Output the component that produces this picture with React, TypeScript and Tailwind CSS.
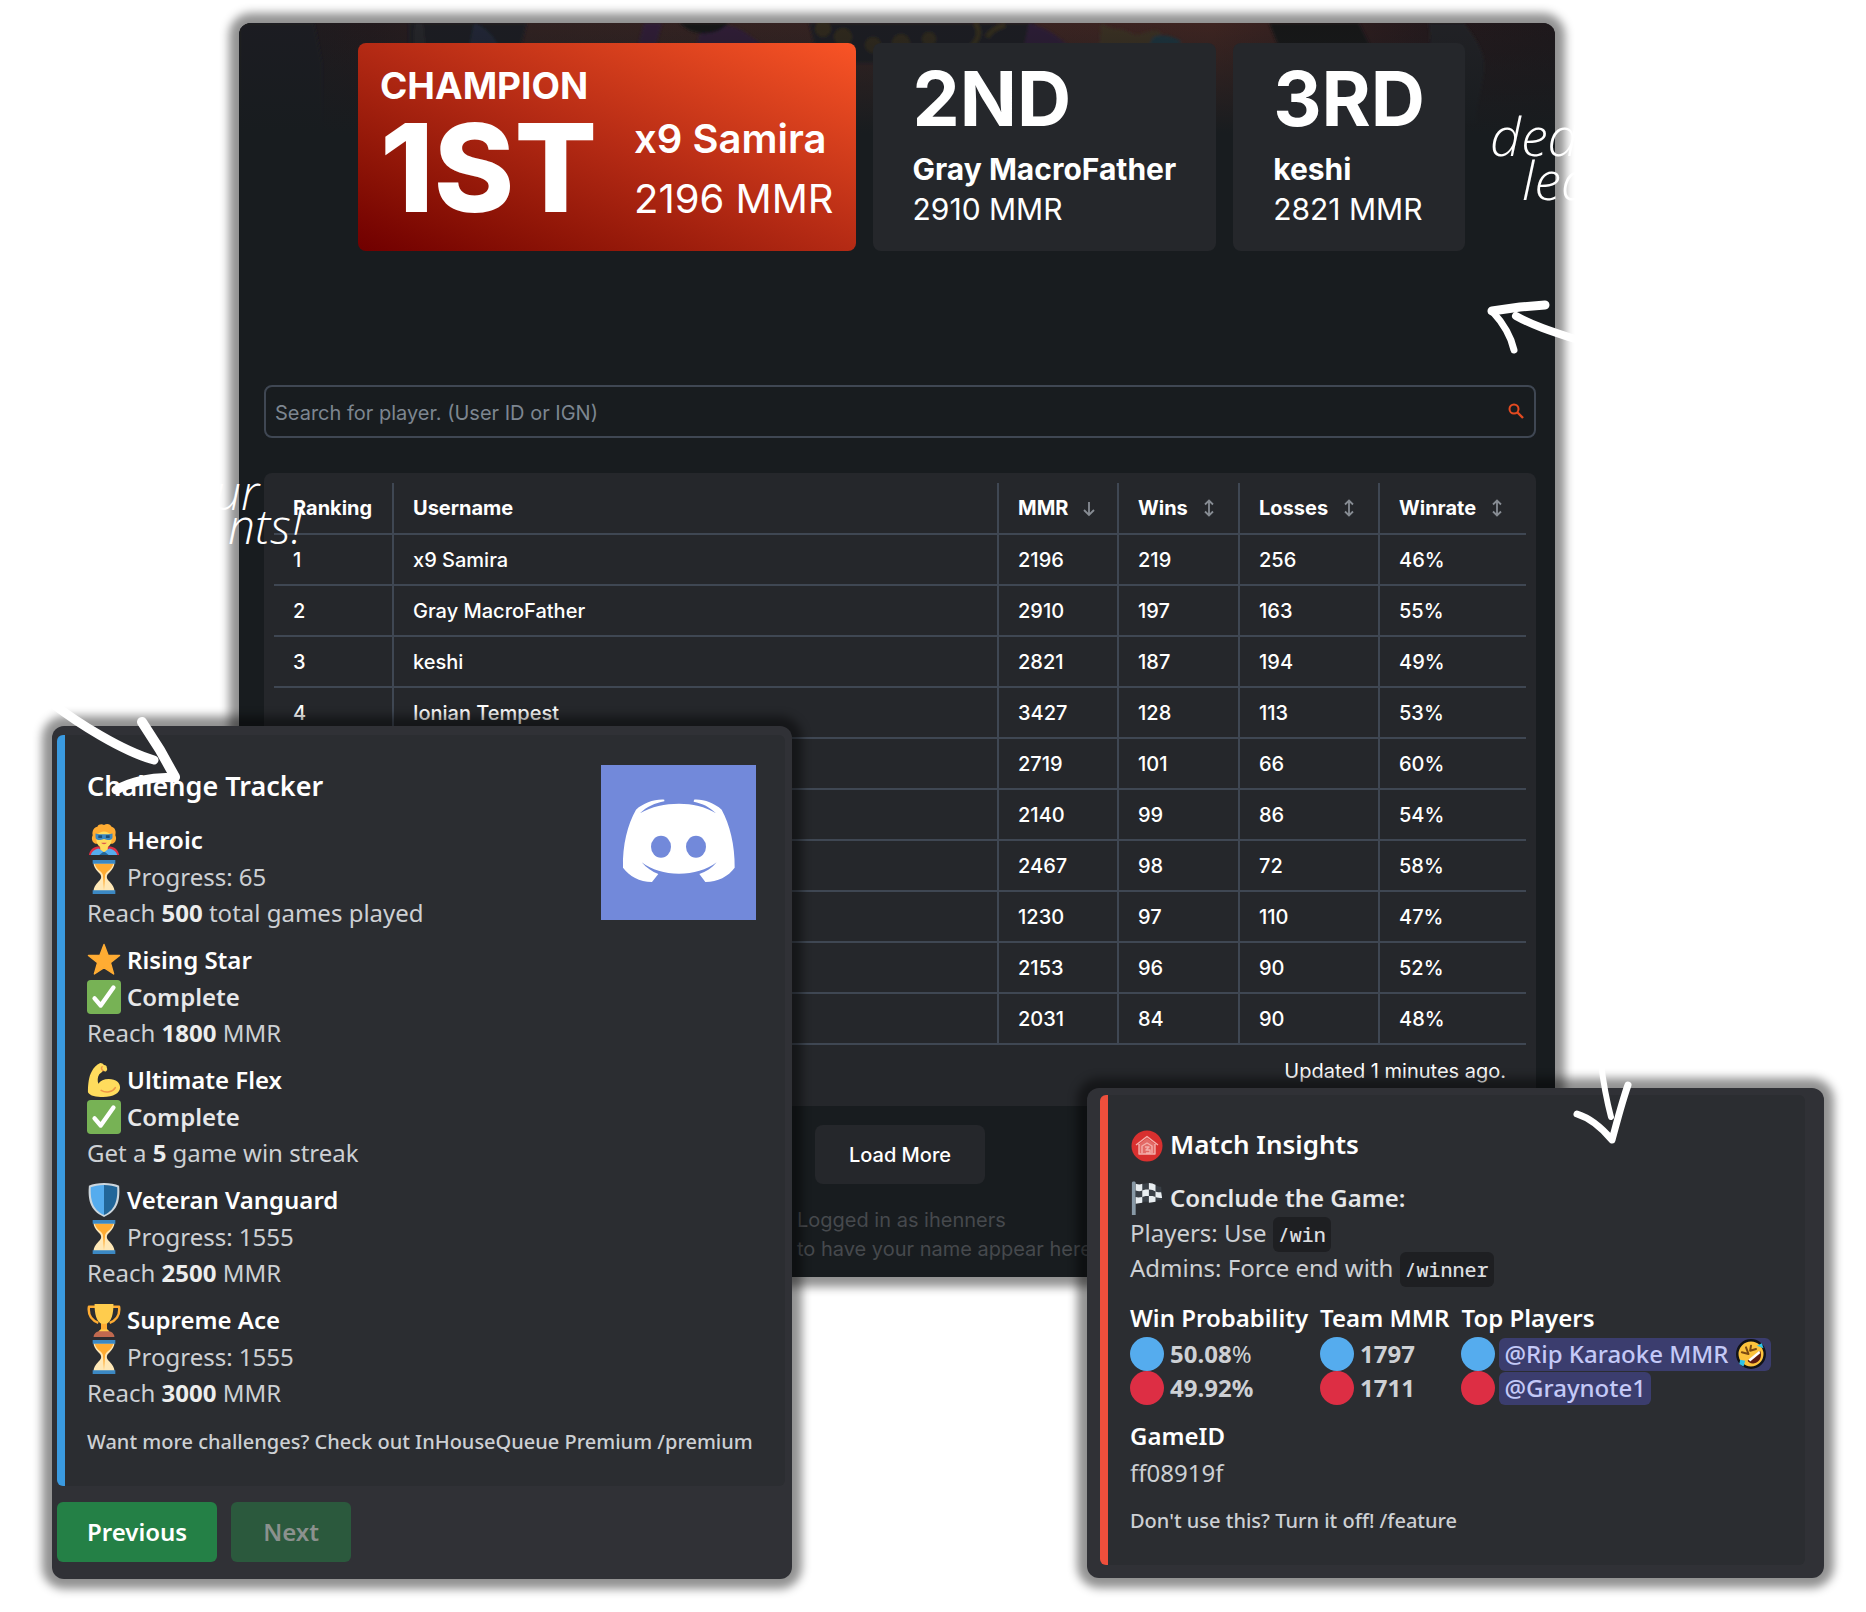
import type { ReactNode } from "react";

type Player = { rank?: number; name?: string; mmr: number; wins: number; losses: number; rate: string };

const players: Player[] = [
  { rank: 1, name: "x9 Samira", mmr: 2196, wins: 219, losses: 256, rate: "46%" },
  { rank: 2, name: "Gray MacroFather", mmr: 2910, wins: 197, losses: 163, rate: "55%" },
  { rank: 3, name: "keshi", mmr: 2821, wins: 187, losses: 194, rate: "49%" },
  { rank: 4, name: "Ionian Tempest", mmr: 3427, wins: 128, losses: 113, rate: "53%" },
  { mmr: 2719, wins: 101, losses: 66, rate: "60%" },
  { mmr: 2140, wins: 99, losses: 86, rate: "54%" },
  { mmr: 2467, wins: 98, losses: 72, rate: "58%" },
  { mmr: 1230, wins: 97, losses: 110, rate: "47%" },
  { mmr: 2153, wins: 96, losses: 90, rate: "52%" },
  { mmr: 2031, wins: 84, losses: 90, rate: "48%" },
];

/* ---------- emoji ---------- */

function Emoji({ children }: { children: ReactNode }) {
  return (
    <svg viewBox="0 0 36 36" className="size-[34px] shrink-0" aria-hidden="true">
      {children}
    </svg>
  );
}

const Hero = () => (
  <Emoji>
    <path fill="#dd2e44" d="M2 34c1-5 4-8 9-9h14c5 1 8 4 9 9z" />
    <path fill="#55acee" d="M4 34c1-4 4-6 8-7l6 3 6-3c4 1 7 3 8 7z" />
    <path fill="#226699" d="M13 34l5-4 5 4z" />
    <path fill="#ffac33" d="M6 13C5 8 8 4 11 4c1-3 5-3 7-2 3-2 7-1 8 2 4 1 5 5 4 9 2 4 0 8-3 9H9c-3-1-5-5-3-9z" />
    <path fill="#ffdc5d" d="M10 12c3-1 5-3 8-3s5 2 8 3v6c0 4-3 8-8 10-5-2-8-6-8-10z" />
    <path fill="#ffdc5d" d="M14 24h8v4l-4 3-4-3z" />
    <path fill="#3b88c3" d="M9 11c3 1 6 1 9 1s6 0 9-1v4c0 2-2 3-5 3-2 0-3-1-4-1s-2 1-4 1c-3 0-5-1-5-3z" />
    <path fill="#1c4d75" d="M12 13h4v3h-4zM20 13h4v3h-4z" />
    <path fill="#dd5a4d" d="M15 21h6c-1 2-5 2-6 0z" />
  </Emoji>
);

const Hourglass = () => (
  <Emoji>
    <path fill="#ffe8b6" d="M21 18c0-2 1-3 3-5 3-3 5-7 5-9V2H7v2c0 2 2 6 5 9 2 2 3 3 3 5s-1 3-3 5c-3 3-5 7-5 9v2h22v-2c0-2-2-6-5-9-2-2-3-3-3-5z" />
    <path fill="#ffac33" d="M8 4c1 3 3 6 6 8 2 2 3 3 3 6l1 14 1-14c0-3 1-4 3-6 3-2 5-5 6-8z" />
    <path fill="#3b88c3" d="M6 0h24v4H6zM6 32h24v4H6z" />
  </Emoji>
);

const Star = () => (
  <Emoji>
    <path fill="#ffac33" d="M18 1.500l4.200 11.300 12.300.5-9.700 7.500 3.400 12L18 26l-10.200 6.800 3.400-12-9.700-7.500 12.300-.5z" stroke="#ffac33" strokeWidth="1.500" strokeLinejoin="round" />
  </Emoji>
);

const Check = () => (
  <Emoji>
    <rect width="36" height="36" rx="4" fill="#77b255" />
    <path d="M8 19.500l6.500 7.500L28 8" fill="none" stroke="#fff" strokeWidth="4.600" strokeLinecap="round" strokeLinejoin="round" />
  </Emoji>
);

const Flex = () => (
  <Emoji>
    <path fill="#ffdc5d" d="M1 31C1 22 2 14 5 9c2-4 5-7 9-9 2 0 3 1 4 2 2 0 3 1 3 3 1 2 0 3-1 4-1 0-2 0-3-1-1 2-3 3-4 4-2 3-2 7-1 10 2-3 6-5 11-5 8 0 12 4 12 9 0 6-7 10-18 10-7 0-14-1-16-5z" />
    <path d="M15 29c5 3 12 2 15-3M17 8c-2-1-2-3-1-4" fill="none" stroke="#ef9645" strokeWidth="1.600" strokeLinecap="round" />
  </Emoji>
);

const Shield = () => (
  <Emoji>
    <path fill="#ccd6dd" d="M18 0C12 0 6 1 2 3c-1 13 0 26 16 33C34 29 35 16 34 3c-4-2-10-3-16-3z" />
    <path fill="#55acee" d="M18 2C12 2 7 3 4 4.500 3.500 16 5 28 18 34z" />
    <path fill="#226699" d="M18 2c6 0 11 1 14 2.500C32.500 16 31 28 18 34z" />
  </Emoji>
);

const Trophy = () => (
  <Emoji>
    <path d="M10 4H2c-1 8 2 14 10 17M26 4h8c1 8-2 14-10 17" fill="none" stroke="#ffac33" strokeWidth="2.600" strokeLinejoin="round" />
    <path fill="#ffcc4d" d="M8 1h20c0 11-2 18-7 21v5c1 2 3 2 3 5H12c0-3 2-3 3-5v-5C10 19 8 12 8 1z" />
    <path fill="#ffac33" d="M15 22h6v6h-6z" />
    <path fill="#c1694f" d="M7 36c0-3 3-6 6-6h10c3 0 6 3 6 6z" />
  </Emoji>
);

const Flag = () => (
  <Emoji>
    <path fill="#8899a6" d="M2 2c0-2 4-2 4 0v34H2z" />
    <path fill="#3a4047" d="M6 3c6 2 9-1 14-1 5 1 8 4 13 4l1 14c-5 0-8 1-13 2-6 0-9 0-15 2z" />
    <path fill="#e8edf0" d="M6 3c3 1 5 1 7 0v7c-2 1-4 1-7 0zM13 10c2-1 5-1 7-1v7c-2 0-5 0-7 1zM6 17c3 1 5 0 7 0v6l-7 1zM20 2c3 0 5 1 7 2v7c-2-1-4-2-7-2zM27 11c2 1 4 1 6 1l1 6c-3 0-5 0-7-1zM20 16c3 0 5 0 7 1v5c-2 0-4 1-7 1z" />
  </Emoji>
);

const Laugh = () => (
  <svg viewBox="0 0 36 36" className="size-[30px] shrink-0" aria-hidden="true">
    <circle cx="18" cy="18" r="16.500" fill="#fcc33c" stroke="#111318" strokeWidth="3" />
    <path d="M14 26L29 14c3 7-1 14-7 15-4 1-7-1-8-3z" fill="#5d1a10" />
    <path d="M15 24.500L28 14l1 3-12 10z" fill="#fff" />
    <path d="M7 16l8 2-3-8M18 8l-1 6 7-2" fill="none" stroke="#7a4a12" strokeWidth="2.400" strokeLinecap="round" strokeLinejoin="round" />
    <path d="M25 8l6-3 2 6zM5 25l6 1-2 7-5-3z" fill="#2fc3e8" />
  </svg>
);

const HouseBadge = () => (
  <svg viewBox="0 0 34 34" className="mt-1 size-[34px] shrink-0" aria-hidden="true">
    <circle cx="17" cy="17" r="15.500" fill="#d8302f" />
    <path d="M9 15l8-6 8 6v10H9z" fill="#e36a66" />
    <path d="M6 16L17 7.500 28 16M9 15v10h16V15M12 24v-7l5-3 5 3v7M15 18h4l-3 3h4v3h-4" fill="none" stroke="#f4b0ac" strokeWidth="1.400" strokeLinejoin="round" />
  </svg>
);

const Dot = ({ blue }: { blue?: boolean }) => (
  <span className={`size-[34px] shrink-0 rounded-full ${blue ? "bg-[#55acee]" : "bg-[#dd2e44]"}`} />
);

/* ---------- leaderboard ---------- */

function HeroArt() {
  return (
    <svg viewBox="0 0 1316 110" preserveAspectRatio="none" className="absolute inset-x-0 top-0 h-[110px] w-full" aria-hidden="true">
      <defs>
        <linearGradient id="sky" x1="0" x2="1" y1="0" y2="0">
          <stop offset="0" stopColor="#1c1c20" />
          <stop offset="0.100" stopColor="#241a1d" />
          <stop offset="0.220" stopColor="#332221" />
          <stop offset="0.500" stopColor="#3a2422" />
          <stop offset="0.740" stopColor="#422521" />
          <stop offset="0.900" stopColor="#26191c" />
          <stop offset="1" stopColor="#1f181b" />
        </linearGradient>
        <linearGradient id="fade" x1="0" x2="0" y1="0" y2="1">
          <stop offset="0" stopColor="#181c1f" stopOpacity="0.100" />
          <stop offset="1" stopColor="#181c1f" />
        </linearGradient>
        <filter id="soften">
          <feGaussianBlur stdDeviation="1.500" />
        </filter>
      </defs>
      <rect width="1316" height="110" fill="url(#sky)" />
      <g filter="url(#soften)">
        <path d="M0 0h75l8 40v70H0z" fill="#1c1f24" />
        <path d="M170 0h118l-16 60H170z" fill="#1d1c22" />
        <path d="M176 0l-4 60h18l-6-60z" fill="#26262b" />
        <path d="M235 0c14 6 20 14 25 24h-30z" fill="#202838" />
        <path d="M405 0h18l-8 30h-18zM460 12c16-10 30-12 44-4l32 22h-80z" fill="#301c38" />
        <path d="M440 0h50c-14 14-36 14-50 0z" fill="#151619" />
        <path d="M570 0h225l20 40H580z" fill="#1c1a20" />
        <g fill="#312c1e">
          <circle cx="584" cy="6" r="8" />
          <circle cx="604" cy="14" r="9" />
          <circle cx="634" cy="22" r="8" />
          <circle cx="662" cy="20" r="9" />
          <circle cx="690" cy="16" r="7" />
        </g>
        <path d="M736 0c6 8 4 16-4 24M766 2c-8 2-14 6-18 12" fill="none" stroke="#352f1d" strokeWidth="5" />
        <path d="M790 0c20 6 34 16 44 28h-50z" fill="#2f1c37" />
        <path d="M862 0c10 8 20 4 30 10s18-6 28-2l14 22h-74z" fill="#3d3024" />
        <path d="M914 14c10-4 20 0 28 4l-6 12h-30z" fill="#1f3640" />
        <path d="M1030 0h90l20 40-10 60h-60z" fill="#191719" />
        <path d="M1190 0h35c12 16 22 30 20 48s-8 34-8 52h-40z" fill="#222226" />
      </g>
      <rect width="1316" height="110" fill="url(#fade)" />
    </svg>
  );
}

function RunnerUp({ place, name, mmr }: { place: string; name: string; mmr: string }) {
  return (
    <article className="rounded-lg bg-[#25272b] px-10 pt-3 text-white">
      <h2 className="text-[75px] leading-[88px] font-bold">{place}</h2>
      <p className="mt-1.5 text-[30px] leading-10 font-bold">{name}</p>
      <p className="text-[30px] leading-10">{mmr}</p>
    </article>
  );
}

function SortIcon({ down }: { down?: boolean }) {
  return (
    <svg viewBox="0 0 12 18" className="h-[18px] w-3" fill="none" stroke="#878c93" strokeWidth="1.800" aria-hidden="true">
      {down ? <path d="M6 3v13M1 11l5 5 5-5" /> : <path d="M6 2v14M2 5.500L6 1.500l4 4M2 12.500l4 4 4-4" />}
    </svg>
  );
}

const headers = [
  { label: "Ranking", width: "w-[119px]" },
  { label: "Username", width: "" },
  { label: "MMR", width: "w-[120px]", sort: "down" },
  { label: "Wins", width: "w-[121px]", sort: "both" },
  { label: "Losses", width: "w-[140px]", sort: "both" },
  { label: "Winrate", width: "w-[147px]", sort: "both" },
];

const cell = "h-[51px] border-b-2 border-r-2 border-[#3f4753] pl-[19px] last:border-r-0";

function Leaderboard() {
  return (
    <main className="relative mr-[311px] ml-[239px] rounded-xl bg-[#181c1f] pt-5 pb-[13px] font-[Inter,sans-serif] text-xl text-white shadow-[0_0_10px_10px_rgba(0,0,0,0.43)]">
      <div className="absolute inset-x-0 top-0 overflow-hidden rounded-t-xl">
        <div className="relative h-[110px]">
          <HeroArt />
        </div>
      </div>

      <section className="relative ml-[119px] flex h-[208px] gap-[17px]">
        <article className="flex rounded-lg bg-linear-to-tr from-[#700000] via-[#b42a14] to-[#f95426] pr-[22px] pl-[22px]">
          <div className="w-[254px]">
            <h2 className="pt-5 text-[37px] leading-[46px] font-bold">CHAMPION</h2>
            <p className="text-[122px] leading-[118px] font-extrabold">1ST</p>
          </div>
          <div className="pt-[71px]">
            <p className="text-[40px] leading-[50px] font-semibold">x9 Samira</p>
            <p className="mt-2.5 text-[40px] leading-[50px]">2196 MMR</p>
          </div>
        </article>
        <RunnerUp place="2ND" name="Gray MacroFather" mmr="2910 MMR" />
        <RunnerUp place="3RD" name="keshi" mmr="2821 MMR" />
      </section>

      <div className="mt-[134px] mr-[19px] ml-[25px] flex h-[53px] items-center rounded-lg border-2 border-[#3f4753] pt-0.5 pr-2.5 pl-[9px]">
        <input
          aria-label="Search for player"
          placeholder="Search for player. (User ID or IGN)"
          className="min-w-0 flex-1 bg-transparent outline-none placeholder:text-[#7d8690]"
        />
        <button aria-label="Search" className="mb-1">
          <svg viewBox="0 0 16 16" className="size-4" fill="none" stroke="#e34a20" strokeWidth="2" aria-hidden="true">
            <circle cx="6" cy="6" r="4.500" />
            <path d="M9.500 9.500L15 15" strokeWidth="2.400" />
          </svg>
        </button>
      </div>

      <section className="mt-[35px] mr-[19px] ml-[25px] rounded-lg bg-[#25272b] p-2.5 pb-0">
        <table className="w-full table-fixed border-collapse">
          <thead>
            <tr>
              {headers.map((h) => (
                <th key={h.label} className={`${cell} ${h.width} text-left font-bold`}>
                  <span className="flex items-center gap-[15px]">
                    {h.label}
                    {h.sort && <SortIcon down={h.sort === "down"} />}
                  </span>
                </th>
              ))}
            </tr>
          </thead>
          <tbody className="font-medium">
            {players.map((p) => (
              <tr key={p.mmr}>
                <td className={cell}>{p.rank}</td>
                <td className={cell}>{p.name}</td>
                <td className={cell}>{p.mmr}</td>
                <td className={cell}>{p.wins}</td>
                <td className={cell}>{p.losses}</td>
                <td className={cell}>{p.rate}</td>
              </tr>
            ))}
          </tbody>
        </table>
        <p className="h-[61px] pt-[11px] pr-5 text-right leading-[30px]">Updated 1 minutes ago.</p>
      </section>

      <div className="mt-[19px] mr-[19px] ml-[25px] flex justify-center">
        <button className="h-[59px] rounded-lg bg-[#25272b] px-[34px] font-medium">Load More</button>
      </div>
      <div className="mt-[22px] ml-[558px] leading-[29px] text-[#46494d]">
        <p>Logged in as ihenners</p>
        <p>to have your name appear here</p>
      </div>
    </main>
  );
}

/* ---------- challenge tracker ---------- */

const challenges = [
  { icon: <Hero />, title: "Heroic", state: "Progress: 65", goal: ["Reach ", "500", " total games played"] },
  { icon: <Star />, title: "Rising Star", goal: ["Reach ", "1800", " MMR"] },
  { icon: <Flex />, title: "Ultimate Flex", goal: ["Get a ", "5", " game win streak"] },
  { icon: <Shield />, title: "Veteran Vanguard", state: "Progress: 1555", goal: ["Reach ", "2500", " MMR"] },
  { icon: <Trophy />, title: "Supreme Ace", state: "Progress: 1555", goal: ["Reach ", "3000", " MMR"] },
];

function DiscordLogo() {
  return (
    <svg viewBox="18 30 465 465" className="size-[155px]" role="img" aria-label="Discord">
      <rect x="18" y="30" width="465" height="465" fill="#7289da" />
      <path
        fill="#fff"
        d="M123 164C146 144 178 132 208 134V139C180 144 155 155 135 175C170 154 210 146 252 146C292 146 330 154 363 175C345 156 322 145 296 140L297 134C326 132 357 144 380 164C404 208 420 270 419 338C400 364 368 381 331 381L313 357C333 351 351 339 365 322C334 345 296 356 252 356C208 356 171 345 140 322C155 339 171 350 190 357L171 381C133 380 103 364 84 338C82 270 98 208 123 164Z"
      />
      <ellipse cx="198" cy="275" rx="30" ry="33" fill="#7289da" />
      <ellipse cx="303" cy="275" rx="30" ry="33" fill="#7289da" />
    </svg>
  );
}

function ChallengeTracker() {
  return (
    <section className="absolute top-[726px] left-[52px] w-[740px] rounded-xl bg-[#303136] pt-[9px] pr-[7px] pb-[17px] pl-[5px] font-['Noto_Sans',sans-serif] text-2xl text-[#cdd0d4] shadow-[0_0_10px_10px_rgba(0,0,0,0.43)]">
      <div className="h-[751px] rounded-md border-l-8 border-[#3a9ae0] bg-[#2b2d31] pt-[30px] pl-[22px]">
        <h2 className="text-[27px] leading-[42px] font-semibold text-white">Challenge Tracker</h2>
        <div className="mt-3.5 flex flex-col gap-3">
          {challenges.map((c) => (
            <div key={c.title}>
              <h3 className="flex h-[37px] items-center gap-1.5 font-semibold text-white">
                {c.icon}
                {c.title}
              </h3>
              <p className="flex h-[38px] items-center gap-1.5">
                {c.state ? <Hourglass /> : <Check />}
                {c.state ?? <b className="font-semibold text-[#e6e7e9]">Complete</b>}
              </p>
              <p className="h-[33px] leading-[33px]">
                {c.goal[0]}
                <b className="text-[#eceded]">{c.goal[1]}</b>
                {c.goal[2]}
              </p>
            </div>
          ))}
        </div>
        <p className="mt-4 text-xl leading-[34px] font-medium whitespace-nowrap">
          Want more challenges? Check out InHouseQueue Premium /premium
        </p>
        <div className="absolute top-[39px] right-9">
          <DiscordLogo />
        </div>
      </div>
      <div className="mt-4 flex gap-3.5 font-semibold">
        <button className="h-[60px] rounded-md bg-[#248046] px-[30px] text-white">Previous</button>
        <button disabled className="h-[60px] rounded-md bg-[#2b593d] px-8 text-[#8b918e]">
          Next
        </button>
      </div>
    </section>
  );
}

/* ---------- match insights ---------- */

const Code = ({ children }: { children: ReactNode }) => (
  <code className="rounded-md bg-[#1e1f22] px-[5px] py-1 font-['Noto_Sans_Mono','DejaVu_Sans_Mono',monospace] text-xl font-medium text-[#dcdee0]">
    {children}
  </code>
);

const Mention = ({ children }: { children: ReactNode }) => (
  <a href="#player" className="flex h-[33px] items-center gap-2 rounded-md bg-[#3b3d6e] px-[5px] font-medium whitespace-nowrap text-[#c4c9f7]">
    {children}
  </a>
);

function MatchInsights() {
  return (
    <section className="absolute top-[1088px] right-[42px] w-[737px] rounded-xl bg-[#303136] pt-[7px] pr-[19px] pb-[13px] pl-[13px] font-['Noto_Sans',sans-serif] text-2xl text-[#cdd0d4] shadow-[0_0_10px_10px_rgba(0,0,0,0.43)]">
      <div className="h-[470px] rounded-md border-l-8 border-[#ee4f3c] bg-[#2b2d31] pt-7 pl-[22px]">
        <h2 className="flex h-[42px] items-center gap-1.5 text-[26px] font-semibold text-white">
          <HouseBadge />
          Match Insights
        </h2>
        <div className="mt-4">
          <h3 className="flex h-[34px] items-center gap-1.5 font-semibold text-[#e6e7e9]">
            <Flag />
            Conclude the Game:
          </h3>
          <p className="leading-[35px]">
            Players: Use <Code>/win</Code>
          </p>
          <p className="leading-[35px]">
            Admins: Force end with <Code>/winner</Code>
          </p>
        </div>
        <div className="mt-3.5 flex gap-3">
          <div>
            <h3 className="leading-[38px] font-semibold text-white">Win Probability</h3>
            <p className="flex h-[34px] items-center gap-1.5">
              <Dot blue />
              <span>
                <b>50.08</b>%
              </span>
            </p>
            <p className="flex h-[34px] items-center gap-1.5 font-bold">
              <Dot />
              49.92%
            </p>
          </div>
          <div>
            <h3 className="leading-[38px] font-semibold text-white">Team MMR</h3>
            <p className="flex h-[34px] items-center gap-1.5 font-bold">
              <Dot blue />
              1797
            </p>
            <p className="flex h-[34px] items-center gap-1.5 font-bold">
              <Dot />
              1711
            </p>
          </div>
          <div>
            <h3 className="leading-[38px] font-semibold text-white">Top Players</h3>
            <p className="flex h-[34px] items-center gap-1">
              <Dot blue />
              <Mention>
                @Rip Karaoke MMR
                <Laugh />
              </Mention>
            </p>
            <p className="flex h-[34px] items-center gap-1">
              <Dot />
              <Mention>@Graynote1</Mention>
            </p>
          </div>
        </div>
        <h3 className="mt-3 leading-[37px] font-semibold text-white">GameID</h3>
        <p className="leading-[37px]">ff08919f</p>
        <p className="mt-[13px] text-xl leading-[34px] font-medium">Don't use this? Turn it off! /feature</p>
      </div>
    </section>
  );
}

/* ---------- hand-drawn notes ---------- */

function Notes() {
  return (
    <>
      <div className="absolute top-[113px] left-[1490px] font-['Open_Sans',sans-serif] text-[54px] leading-[44px] font-light text-white italic">
        <p>ded</p>
        <p className="pl-8">lea</p>
      </div>
      <div className="absolute top-[475px] left-[214px] font-['Open_Sans',sans-serif] text-[48px] leading-[34px] font-light text-white italic">
        <p>ur</p>
        <p className="pl-3.5">nts!</p>
      </div>
      <svg viewBox="0 0 90 60" className="absolute top-[298px] left-[1486px] h-[60px] w-[90px]" fill="none" stroke="#fff" strokeWidth="9" strokeLinecap="round" strokeLinejoin="round" aria-hidden="true">
        <path d="M59 7L34 9 6 13" />
        <path d="M6 13C17 25 25 38 28 52" strokeWidth="7" />
        <path d="M30 18C46 27 64 33 92 42" strokeWidth="8" />
      </svg>
      <svg viewBox="0 0 130 100" className="absolute top-[700px] left-[52px] h-[100px] w-[130px]" fill="none" stroke="#fff" strokeWidth="9" strokeLinecap="round" strokeLinejoin="round" aria-hidden="true">
        <path d="M0 3C24 22 70 51 102 60" />
        <path d="M90 22L108 50 123 77" strokeWidth="10" />
        <path d="M123 78C100 76 78 82 64 90" />
      </svg>
      <svg viewBox="0 0 66 90" className="absolute top-[1060px] left-[1570px] h-[90px] w-[66px]" fill="none" stroke="#fff" strokeWidth="7" strokeLinecap="round" strokeLinejoin="round" aria-hidden="true">
        <path d="M31 3C33 20 36 38 41 57" strokeWidth="6" />
        <path d="M58 25C52 42 48 58 42 80C32 68 20 58 7 54" />
      </svg>
    </>
  );
}

export default function App() {
  return (
    <div className="relative min-h-[1612px] overflow-hidden bg-white pt-[23px]">
      <Leaderboard />
      <ChallengeTracker />
      <MatchInsights />
      <Notes />
    </div>
  );
}
